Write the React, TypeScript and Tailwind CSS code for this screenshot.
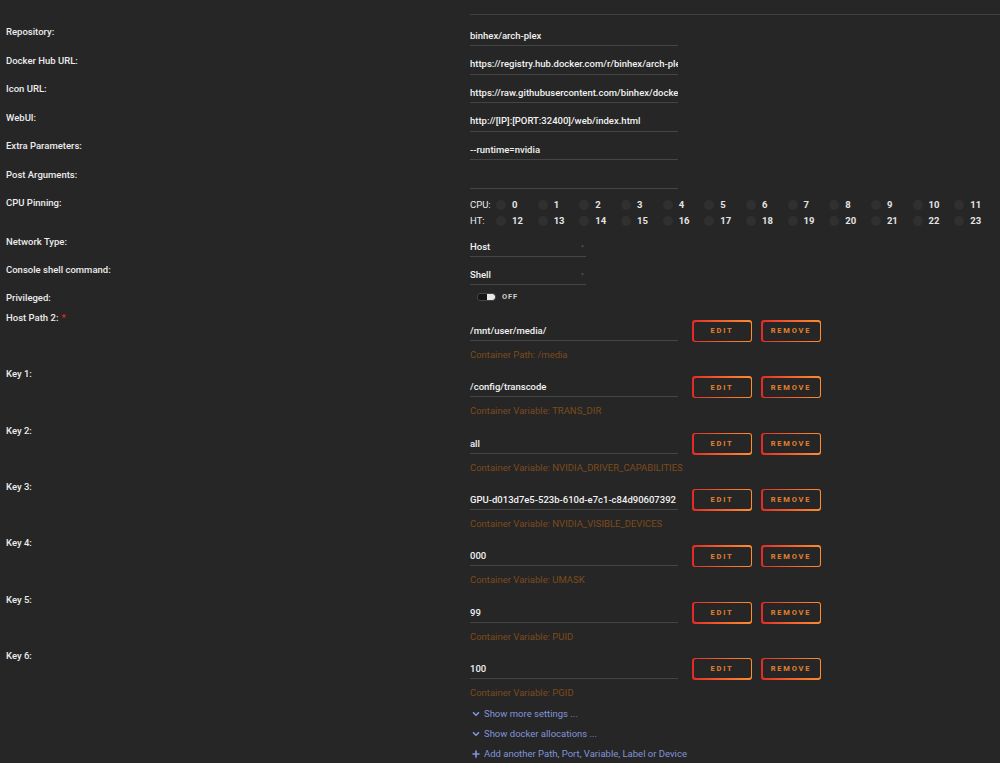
import React from "react";
import { ChevronDown, Plus } from "lucide-react";

const inputs: [string, string][] = [
  ["Repository:", "binhex/arch-plex"],
  ["Docker Hub URL:", "https://registry.hub.docker.com/r/binhex/arch-plex"],
  ["Icon URL:", "https://raw.githubusercontent.com/binhex/docker-templates/master/binhex/images/plex-icon.png"],
  ["WebUI:", "http://[IP]:[PORT:32400]/web/index.html"],
  ["Extra Parameters:", "--runtime=nvidia"],
  ["Post Arguments:", ""],
];

const keys: [string, string, string, boolean][] = [
  ["Host Path 2:", "/mnt/user/media/", "Container Path: /media", true],
  ["Key 1:", "/config/transcode", "Container Variable: TRANS_DIR", false],
  ["Key 2:", "all", "Container Variable: NVIDIA_DRIVER_CAPABILITIES", false],
  ["Key 3:", "GPU-d013d7e5-523b-610d-e7c1-c84d90607392", "Container Variable: NVIDIA_VISIBLE_DEVICES", false],
  ["Key 4:", "000", "Container Variable: UMASK", false],
  ["Key 5:", "99", "Container Variable: PUID", false],
  ["Key 6:", "100", "Container Variable: PGID", false],
];

function Btn({ label }: { label: string }) {
  return (
    <div className="w-[60px] h-[22px] rounded-[3px] p-[1.5px] bg-linear-to-r from-[#e22828] to-[#ff8c2f]">
      <div className="w-full h-full rounded-[2px] bg-[#262626] flex items-center justify-center text-[7.5px] font-bold tracking-[1.8px] text-[#e5812d]">
        {label}
      </div>
    </div>
  );
}

function Cpu({ label, start }: { label: string; start: number }) {
  return (
    <div className="flex items-center h-[16px]">
      <div className="w-[26px] text-[#ececec]">{label}</div>
      {Array.from({ length: 12 }, (_, i) => (
        <div key={i} className="w-[41.67px] flex items-center shrink-0">
          <span className="w-[10px] h-[10px] rounded-full bg-[#303030] shrink-0" />
          <span className="ml-[6px] font-bold text-[#e4e4e4]">{start + i}</span>
        </div>
      ))}
    </div>
  );
}

export default function App() {
  return (
    <div className="w-[1000px] h-[763px] overflow-hidden bg-[#262626] text-[#ececec] text-[9.5px] font-['Roboto',sans-serif]">
      <div className="h-[14px]" />
      <div className="ml-[470px] border-t border-[#404040] h-[8px]" />

      {inputs.map(([l, v]) => (
        <div key={l} className="flex h-[28.5px]">
          <div className="w-[470px] pl-[6px] pt-[4px] leading-[12px] font-medium">{l}</div>
          <div className="w-[208px] h-[24px] border-b border-[#454545] flex items-center pt-[5px] overflow-hidden whitespace-nowrap text-[#f2f2f2] font-medium">
            {v}
          </div>
        </div>
      ))}

      <div className="flex h-[40px]">
        <div className="w-[470px] pl-[6px] pt-[4px] leading-[12px] font-medium">CPU Pinning:</div>
        <div className="pt-[4px] flex flex-col">
          <Cpu label="CPU:" start={0} />
          <Cpu label="HT:" start={12} />
        </div>
      </div>

      {[
        ["Network Type:", "Host"],
        ["Console shell command:", "Shell"],
      ].map(([l, v]) => (
        <div key={l} className="flex h-[28px]">
          <div className="w-[470px] pl-[6px] pt-[3px] leading-[12px] font-medium">{l}</div>
          <div className="w-[116px] h-[24px] border-b border-[#454545] flex items-center justify-between pt-[5px] text-[#f2f2f2] font-medium">
            <span>{v}</span>
            <span className="text-[5px] text-[#4a4a4a] mr-[1px]">▼</span>
          </div>
        </div>
      ))}

      <div className="flex h-[23px]">
        <div className="w-[470px] pl-[6px] pt-[3px] leading-[12px] font-medium">Privileged:</div>
        <div className="flex items-center h-[16px] pl-[7px]">
          <div className="w-[19px] h-[8px] rounded-[3px] bg-[#151515] border border-[#444] flex justify-end overflow-hidden">
            <div className="w-[8px] h-full bg-[#e8e8e8] rounded-r-[2px]" />
          </div>
          <span className="ml-[6px] text-[7.5px] font-bold tracking-[0.8px] text-[#d0d0d0]">OFF</span>
        </div>
      </div>

      {keys.map(([l, v, d, req]) => (
        <div key={l} className="flex h-[56.333px]">
          <div className="w-[470px] pl-[6px] leading-[12px] font-medium">
            {l}
            {req && <span className="text-[#e22828] ml-[3px]">*</span>}
          </div>
          <div className="flex flex-col pt-[8px]">
            <div className="flex items-start">
              <div className="w-[208px] h-[21px] border-b border-[#454545] flex items-center pt-[2px] overflow-hidden whitespace-nowrap text-[#f2f2f2] font-medium">
                {v}
              </div>
              <div className="ml-[14px] flex gap-[9px]">
                <Btn label="EDIT" />
                <Btn label="REMOVE" />
              </div>
            </div>
            <div className="mt-[7px] leading-[12px] text-[#7d4b1b]">{d}</div>
          </div>
        </div>
      ))}

      <div className="ml-[471px] -mt-[2px] flex flex-col text-[#8194d9]">
        {[
          [true, "Show more settings ..."],
          [true, "Show docker allocations ..."],
          [false, "Add another Path, Port, Variable, Label or Device"],
        ].map(([chev, t]) => (
          <div key={t as string} className="flex items-center h-[20px]">
            {chev ? (
              <ChevronDown size={10} strokeWidth={4} className="text-[#8194d9]" />
            ) : (
              <Plus size={10} strokeWidth={4} className="text-[#8194d9]" />
            )}
            <span className="ml-[3px]">{t as string}</span>
          </div>
        ))}
      </div>
    </div>
  );
}
